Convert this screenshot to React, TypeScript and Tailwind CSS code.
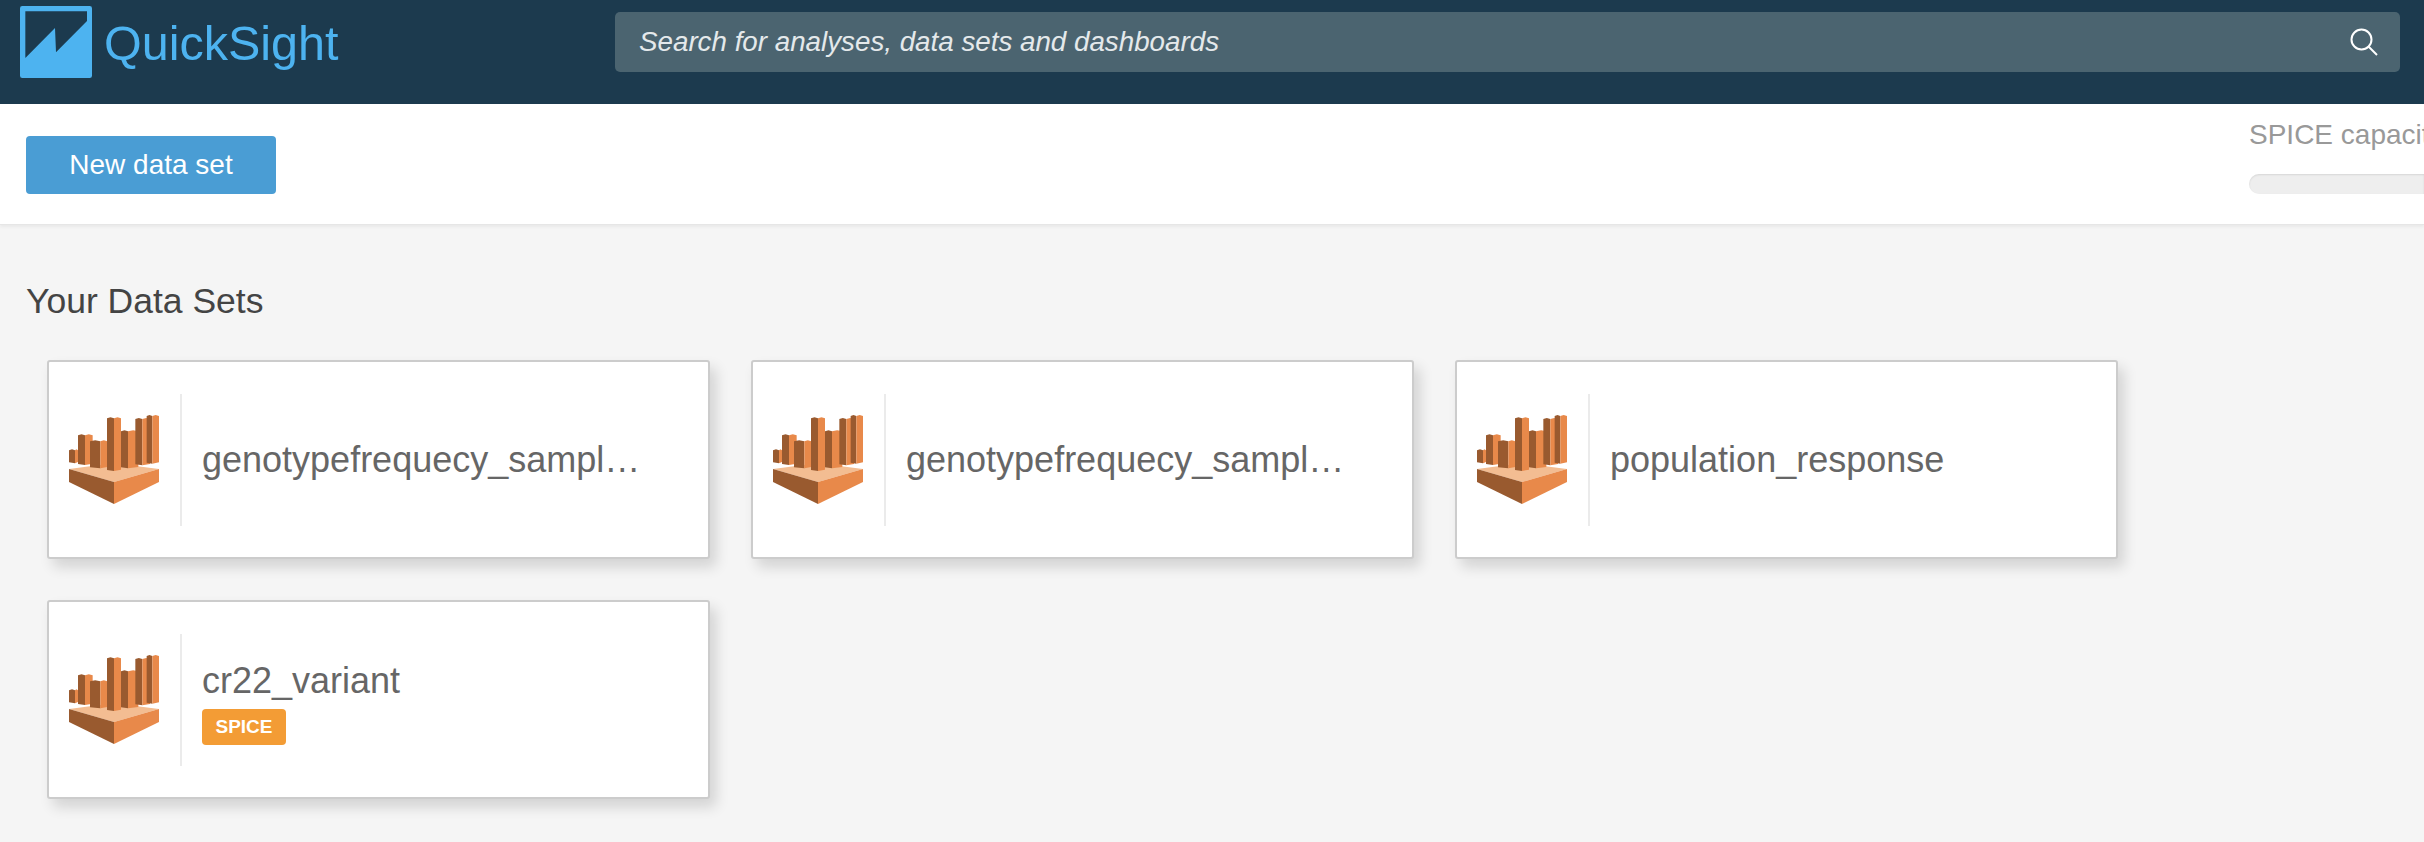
import React from "react";

function Logo() {
  return (
    <svg viewBox="0 0 216 216" className="w-[72px] h-[72px] shrink-0">
      <rect width="216" height="216" rx="7" fill="#4db3f0" />
      <polygon points="16,16 201,16 201,45 108,139 105,66 16,156" fill="#1c3a4e" />
    </svg>
  );
}

function BucketIcon() {
  const bars: [number, number, number, number, number][] = [
    [0, 18, 27, 103, 145],
    [27, 48, 71, 58, 150],
    [63, 94, 115, 76, 160],
    [114, 135, 156, 7, 168],
    [156, 177, 208, 46, 160],
    [199, 220, 243, 9, 151],
    [233, 250, 270, 0, 146],
  ];
  return (
    <svg viewBox="0 0 270 267" className="w-[90px] h-[89px] shrink-0">
      <polygon points="0,162 63,154 135,145 270,162 135,201" fill="#f3bd92" />
      {bars.map(([a, b, c, t, d], i) => (
        <g key={i}>
          <polygon points={`${a},${t + 3} ${(a + b) / 2},${t} ${b},${t + 3} ${b},${d} ${a},${d - 3}`} fill="#995a2f" />
          <polygon points={`${b},${t + 3} ${(b + c) / 2},${t} ${c},${t + 3} ${c},${d - 4} ${b},${d}`} fill="#e8894a" />
        </g>
      ))}
      <polygon points="0,162 135,201 135,267 0,201" fill="#995a2f" />
      <polygon points="135,201 270,162 270,201 135,267" fill="#e8894a" />
    </svg>
  );
}

function Card({ name, spice }: { name: string; spice?: boolean }) {
  return (
    <div className="flex items-center w-[663px] h-[199px] bg-white rounded-[3px] border-2 border-[#cccccc] pl-[20px] pr-[54px] shadow-[6px_8px_14px_rgba(0,0,0,0.14)]">
      <BucketIcon />
      <div className="w-[2px] h-[132px] bg-[#ebebeb] ml-[21px] mr-[20px] shrink-0" />
      <div className="min-w-0 flex-1">
        <div className={`text-[36px] leading-[40px] text-[#666666] truncate ${spice ? "mt-[7px]" : ""}`}>{name}</div>
        {spice && (
          <div className="mt-[8px] w-[84px] h-[36px] rounded-[4px] bg-[#f39c35] text-white text-[19px] font-bold flex items-center justify-center">
            SPICE
          </div>
        )}
      </div>
    </div>
  );
}

export default function App() {
  return (
    <div className="w-[2424px] h-[842px] overflow-hidden bg-[#f5f5f5] font-['Liberation_Sans',Arial,sans-serif]">
      <header className="h-[104px] bg-[#1c3a4e] flex items-start pl-[20px] pr-[24px]">
        <div className="mt-[6px] flex items-center">
          <Logo />
          <span className="ml-[12px] mt-[1px] text-[48.5px] leading-[60px] text-[#4db3f0]">QuickSight</span>
        </div>
        <div className="ml-auto mt-[12px] w-[1785px] h-[60px] rounded-[5px] bg-[#4b6470] flex items-center justify-between pl-[24px] pr-[22px]">
          <span className="text-[27.75px] italic text-[#e4e9eb]">Search for analyses, data sets and dashboards</span>
          <svg viewBox="0 0 28 28" className="w-[28px] h-[28px]" fill="none" stroke="white" strokeWidth="2">
            <circle cx="11.5" cy="11.5" r="10" />
            <path d="M18.5 18.5 L27 27" />
          </svg>
        </div>
      </header>
      <div className="h-[121px] bg-white border-b border-[#e6e6e6] shadow-[0_2px_3px_rgba(0,0,0,0.05)] flex items-start justify-between pl-[26px]">
        <button className="mt-[32px] w-[250px] h-[58px] rounded-[4px] bg-[#4a9dd4] text-white text-[28px]">New data set</button>
        <div className="w-[175px] pt-[15px] overflow-hidden">
          <div className="text-[28px] leading-[32px] text-[#999999] whitespace-nowrap">SPICE capacity</div>
          <div className="mt-[23px] h-[20px] rounded-l-full bg-[#eeeeee] shadow-[inset_0_1px_2px_rgba(0,0,0,0.1)]" />
        </div>
      </div>
      <main className="pl-[26px] pt-[56px]">
        <h1 className="text-[35.5px] leading-[40px] text-[#444444]">Your Data Sets</h1>
        <div className="mt-[39px] ml-[21px] grid grid-cols-[repeat(3,663px)] gap-x-[41px] gap-y-[41px]">
          <Card name="genotypefrequecy_sample_data_for_analysis" />
          <Card name="genotypefrequecy_sample_data_for_analysis" />
          <Card name="population_response" />
          <Card name="cr22_variant" spice />
        </div>
      </main>
    </div>
  );
}
